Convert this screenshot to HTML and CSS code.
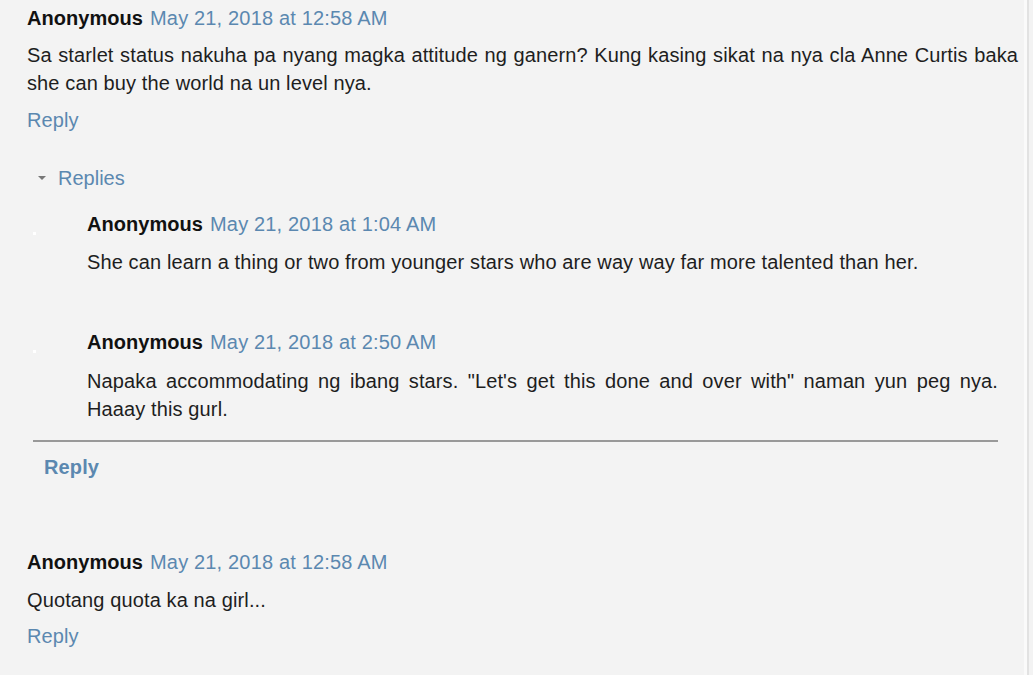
FILE: index.html
```html
<!DOCTYPE html>
<html>
<head>
<meta charset="utf-8">
<link rel="stylesheet" href="styles.css">
</head>
<body>
<div class="page">
  <div class="comment top">
    <div class="head"><span class="user">Anonymous</span> <a class="date" href="#">May 21, 2018 at 12:58 AM</a></div>
    <p class="text">Sa starlet status nakuha pa nyang magka attitude ng ganern? Kung kasing sikat na nya cla Anne Curtis baka she can buy the world na un level nya.</p>
    <a class="reply" href="#">Reply</a>
    <div class="replies">
      <div class="toggle"><span class="tri"></span><a href="#">Replies</a></div>
      <div class="child first">
        <div class="avatar"><span class="dot"></span></div>
        <div class="cbody">
          <div class="head"><span class="user">Anonymous</span> <a class="date" href="#">May 21, 2018 at 1:04 AM</a></div>
          <p class="text">She can learn a thing or two from younger stars who are way way far more talented than her.</p>
        </div>
      </div>
      <div class="child second">
        <div class="avatar"><span class="dot"></span></div>
        <div class="cbody">
          <div class="head"><span class="user">Anonymous</span> <a class="date" href="#">May 21, 2018 at 2:50 AM</a></div>
          <p class="text">Napaka accommodating ng ibang stars. "Let's get this done and over with" naman yun peg nya. Haaay this gurl.</p>
        </div>
      </div>
      <div class="divider"></div>
      <a class="reply bold" href="#">Reply</a>
    </div>
  </div>
  <div class="comment last">
    <div class="head"><span class="user">Anonymous</span> <a class="date" href="#">May 21, 2018 at 12:58 AM</a></div>
    <p class="text short">Quotang quota ka na girl...</p>
    <a class="reply small" href="#">Reply</a>
  </div>
</div>
</body>
</html>
```
FILE: styles.css
```css
html, body {
  margin: 0;
  padding: 0;
  background: #f3f3f3;
}
body {
  font-family: "Liberation Sans", Arial, sans-serif;
  font-size: 20px;
  line-height: 28px;
  letter-spacing: 0.12px;
  color: #1e1e1e;
}
a {
  color: #5b88b0;
  text-decoration: none;
}
.page {
  box-sizing: border-box;
  width: 1029px;
  min-height: 675px;
  padding: 4px 0 0 27px;
  border-right: 2px solid #e2e2e2;
  box-shadow: inset -3px 0 0 #fafafa;
}
.comment {
  width: 991px;
}
.head {
  display: flex;
  gap: 7px;
  white-space: nowrap;
}
.user {
  font-weight: bold;
  color: #111;
  letter-spacing: 0.05px;
}
.date {
  letter-spacing: 0.17px;
}
.text {
  margin: 9px 0 0;
  text-align: justify;
}
.reply {
  display: block;
  width: max-content;
  margin-top: 9px;
}
.replies {
  margin: 30px 20px 0 6px;
}
.toggle {
  display: flex;
  align-items: center;
  height: 28px;
}
.toggle a {
  letter-spacing: 0;
}
.tri {
  width: 0;
  height: 0;
  margin: 0 12px 0 5px;
  border-left: 4px solid transparent;
  border-right: 4px solid transparent;
  border-top: 4px solid #777;
}
.child {
  display: flex;
}
.child.first {
  margin-top: 18px;
}
.child.second {
  margin-top: 52px;
}
.child .text {
  margin-top: 10px;
}
.child.second .text {
  margin-top: 11px;
}
.avatar {
  width: 54px;
  flex: none;
}
.dot {
  display: block;
  width: 3px;
  height: 3px;
  margin-top: 22px;
  background: #ffffff;
}
.cbody {
  flex: 1;
}
.divider {
  height: 2px;
  margin-top: 17px;
  background: #999;
}
.reply.bold {
  font-weight: bold;
  margin: 11px 0 0 11px;
}
.comment.last {
  margin-top: 67px;
}
.text.short {
  margin-top: 10px;
}
.reply.small {
  margin-top: 8px;
}
```
